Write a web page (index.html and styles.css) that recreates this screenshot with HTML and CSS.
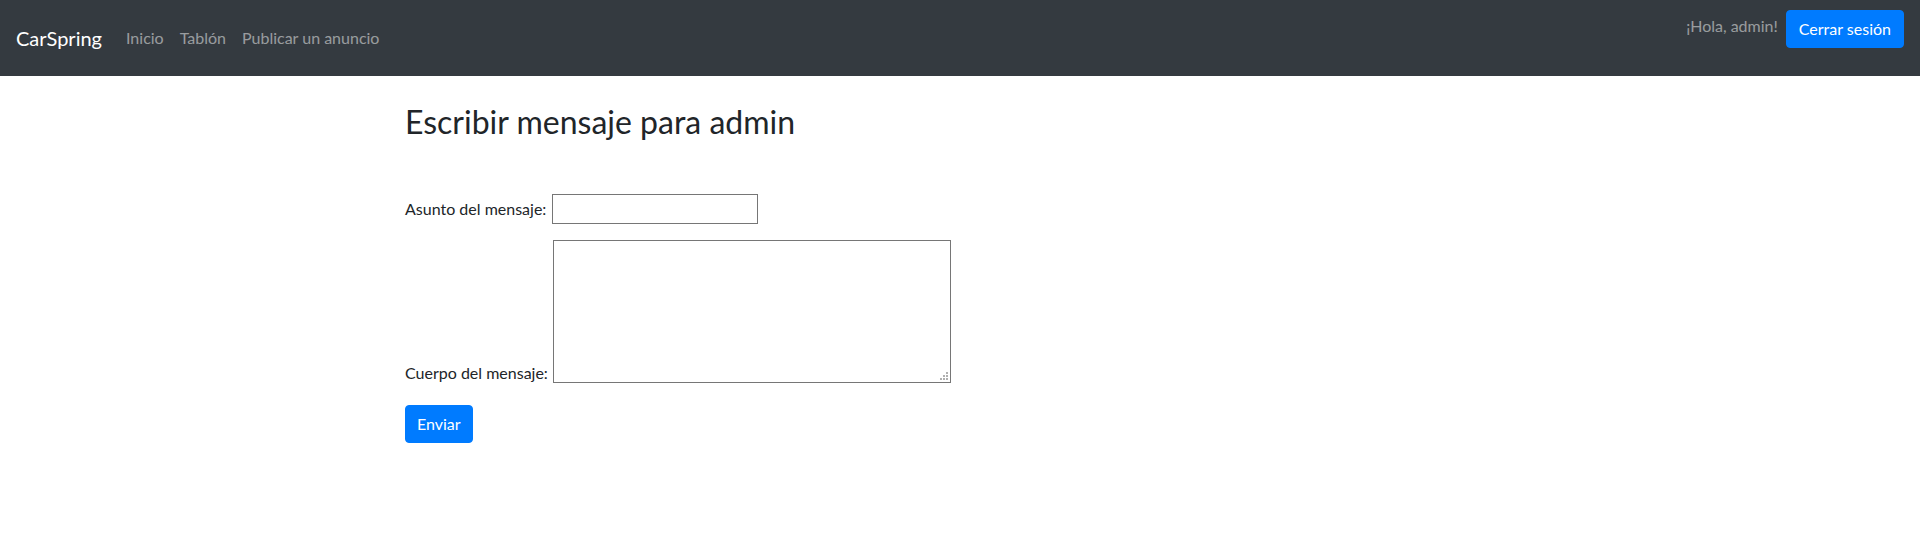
FILE: index.html
```html
<!DOCTYPE html>
<html lang="es">
<head>
<meta charset="utf-8">
<title>CarSpring</title>
<link rel="stylesheet" href="styles.css">
</head>
<body>
<nav class="navbar">
  <div class="nav-left">
    <a class="brand" href="#">CarSpring</a>
    <a class="nav-link" href="#">Inicio</a>
    <a class="nav-link" href="#">Tablón</a>
    <a class="nav-link" href="#">Publicar un anuncio</a>
  </div>
  <div class="nav-right">
    <span class="hello">¡Hola, admin!</span>
    <button class="btn" type="button">Cerrar sesión</button>
  </div>
</nav>
<main class="container">
  <h2 class="title">Escribir mensaje para admin</h2>
  <form class="msg-form">
    <div class="row row-center">
      <label class="label" for="asunto">Asunto del mensaje:</label>
      <input class="field" id="asunto" type="text">
    </div>
    <div class="row row-bottom">
      <label class="label label-low" for="cuerpo">Cuerpo del mensaje:</label>
      <span class="area-wrap">
        <textarea class="area" id="cuerpo"></textarea>
        <svg class="grip" width="8" height="8" viewBox="0 0 8 8" aria-hidden="true">
          <rect x="6" y="0" width="2" height="2" fill="#b0b0b0"/>
          <rect x="3" y="3" width="2" height="2" fill="#b0b0b0"/>
          <rect x="6" y="3" width="2" height="2" fill="#b0b0b0"/>
          <rect x="0" y="6" width="2" height="2" fill="#b0b0b0"/>
          <rect x="3" y="6" width="2" height="2" fill="#b0b0b0"/>
          <rect x="6" y="6" width="2" height="2" fill="#b0b0b0"/>
        </svg>
      </span>
    </div>
    <button class="btn btn-send" type="button">Enviar</button>
  </form>
</main>
</body>
</html>
```
FILE: styles.css
```css
* { box-sizing: border-box; }
html, body { margin: 0; }
body {
  font-family: "Segoe UI", Lato, "Liberation Sans", sans-serif;
  font-size: 16px;
  line-height: 1.5;
  color: #212529;
  background: #fff;
}
.navbar {
  display: flex;
  justify-content: space-between;
  align-items: flex-start;
  height: 76px;
  padding: 0 16px;
  background: #343a40;
}
.nav-left {
  display: flex;
  align-items: center;
  height: 76px;
}
.brand {
  color: #fff;
  font-size: 20px;
  line-height: 30px;
  margin-right: 16px;
  text-decoration: none;
}
.nav-link {
  color: rgba(255, 255, 255, 0.5);
  padding: 8px;
  text-decoration: none;
}
.nav-right {
  display: flex;
  align-items: flex-start;
  gap: 8px;
  padding-top: 10px;
}
.hello {
  color: rgba(255, 255, 255, 0.5);
  line-height: 24px;
  padding-top: 4px;
}
.btn {
  font-family: inherit;
  font-size: 16px;
  line-height: 24px;
  color: #fff;
  background: #007bff;
  border: 1px solid #007bff;
  border-radius: 4px;
  padding: 6px 12px;
  cursor: pointer;
}
.btn-send { padding: 6px 11px; }
.container {
  max-width: 1140px;
  margin: 0 auto;
  padding: 0 15px;
}
.title {
  font-size: 32px;
  font-weight: 400;
  line-height: 1.2;
  margin: 27px 0 53px;
}
.msg-form { margin: 0; }
.row {
  display: flex;
}
.row-center {
  align-items: center;
  gap: 6px;
  margin-bottom: 16px;
}
.row-bottom {
  align-items: flex-end;
  gap: 5px;
  margin-bottom: 22px;
}
.label { line-height: 24px; }
.label-low { margin-bottom: -2px; }
.field {
  font: inherit;
  width: 206px;
  height: 30px;
  padding: 1px 2px;
  border: 1px solid #767676;
  border-radius: 0;
}
.area-wrap {
  position: relative;
  display: block;
}
.area {
  display: block;
  font: inherit;
  width: 398px;
  height: 143px;
  padding: 2px;
  border: 1px solid #767676;
  border-radius: 0;
  resize: none;
}
.grip {
  position: absolute;
  right: 3px;
  bottom: 3px;
  display: block;
}
```
